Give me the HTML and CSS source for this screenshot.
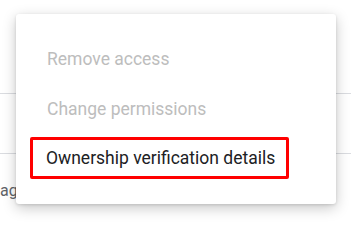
FILE: index.html
```html
<!DOCTYPE html>
<html>
<head>
<meta charset="utf-8">
<link rel="stylesheet" href="styles.css">
</head>
<body>
<div class="page">
  <div class="row row-first"></div>
  <div class="row"></div>
  <div class="row-text">ag</div>
</div>
<div class="menu">
  <div class="item disabled">Remove access</div>
  <div class="item disabled">Change permissions</div>
  <div class="item"><span class="highlight">Ownership verification details</span></div>
</div>
</body>
</html>
```
FILE: styles.css
```css
html, body {
  margin: 0;
  padding: 0;
  background: #ffffff;
  font-family: Roboto, "Liberation Sans", sans-serif;
}
.page {
  width: 351px;
  height: 214px;
  overflow: hidden;
}
.row {
  height: 59px;
  border-bottom: 1px solid #dadce0;
}
.row-first {
  height: 93px;
}
.row-text {
  font-size: 16px;
  line-height: 20px;
  margin-top: 27px;
  color: #5f6368;
}
.menu {
  position: absolute;
  left: 16px;
  top: 14px;
  width: 320px;
  height: 170px;
  padding-top: 20px;
  background: #ffffff;
  border-radius: 3px;
  box-shadow: 0 4px 14px rgba(0,0,0,0.22), 0 1px 3px rgba(0,0,0,0.12);
}
.item {
  height: 50px;
  line-height: 50px;
  font-size: 17.5px;
  padding-left: 31px;
  color: #202124;
  white-space: nowrap;
}
.item.disabled {
  color: #bdbdbd;
}
.highlight {
  display: inline-block;
  margin-left: -17px;
  padding: 0 11px 0 13px;
  height: 36px;
  line-height: 36px;
  border: 3px solid #ff0000;
  border-radius: 2px;
  vertical-align: top;
  margin-top: 3px;
}
```
